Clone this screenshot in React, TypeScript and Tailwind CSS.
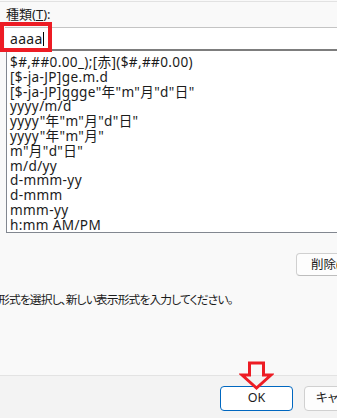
import React from 'react';

const formats = [
  '$#,##0.00_);[赤]($#,##0.00)',
  '[$-ja-JP]ge.m.d',
  '[$-ja-JP]ggge"年"m"月"d"日"',
  'yyyy/m/d',
  'yyyy"年"m"月"d"日"',
  'yyyy"年"m"月"',
  'm"月"d"日"',
  'm/d/yy',
  'd-mmm-yy',
  'd-mmm',
  'mmm-yy',
  'h:mm AM/PM',
];

const font = "font-['Noto_Sans','Noto_Sans_CJK_JP',sans-serif]";

const App = () => {
  return (
    <div
      className={`relative w-[337px] h-[418px] overflow-hidden bg-[#f9f9f9] text-[#1b1b1b] flex flex-col ${font} [font-feature-settings:'palt']`}
    >
      <div className="h-px mt-px bg-[#e2e2e2]" />

      {/* 種類 */}
      <div className="pl-[6px] pt-[3px] h-[25px] text-[13px] leading-[18px]">
        種類(<span className="underline">T</span>):
      </div>
      <div className="ml-[5px] w-[360px] h-[24px] bg-white border-t border-[#c4c4c4] border-b-2 border-b-[#7d7d7d] pl-[5px] flex items-center text-[14px] tracking-[0.3px]">
        <span>aaaa</span>
        <span className="w-px h-[14px] bg-black" />
      </div>

      {/* list */}
      <div className="ml-[6px] w-[360px] h-[182px] bg-white border-l border-b border-[#828790] pl-[3px] pt-[4px] text-[13.6px] tracking-[0.35px] leading-[14.8px] whitespace-nowrap">
        {formats.map(f => (
          <div key={f}>{f}</div>
        ))}
      </div>

      <div className="ml-[296px] mt-[20px] w-[70px] h-[23px] rounded-[4px] border border-[#d0d0d0] border-b-[#bdbdbd] bg-[#fdfdfd] pl-[14px] text-[12.5px] leading-[21px] whitespace-nowrap">
        削除(D)
      </div>

      <div className="-ml-[2px] mt-[15px] text-[11.8px] leading-[16px] tracking-[-0.9px] whitespace-nowrap">
        形式を選択し、新しい表示形式を入力してください。
      </div>

      <div className="flex-1" />

      {/* footer */}
      <div className="h-[43px] border-t border-[#e3e3e3] bg-[#f3f3f3] flex gap-[11px] pl-[220px] pt-[10px]">
        <div className="w-[73px] h-[25px] shrink-0 rounded-[4px] border border-[#0067c0] bg-white flex items-center justify-center text-[12.5px]">
          OK
        </div>
        <div className="w-[73px] h-[25px] shrink-0 rounded-[4px] border border-[#d0d0d0] bg-[#fdfdfd] flex items-center pl-[11px] text-[12.5px] whitespace-nowrap">
          キャンセル
        </div>
      </div>

      {/* annotations */}
      <div className="absolute left-0 top-[22px] w-[52px] h-[30px] border-4 border-[#ed1c24]" />
      <svg className="absolute left-[239px] top-[361px]" width="35" height="30" viewBox="0 0 35 30">
        <polygon
          points="10.5,2 24.5,2 24.5,14 32,14 17.5,27 3,14 10.5,14"
          fill="none"
          stroke="#ed1c24"
          strokeWidth="3"
          strokeLinejoin="miter"
        />
      </svg>
    </div>
  );
};

export default App;
